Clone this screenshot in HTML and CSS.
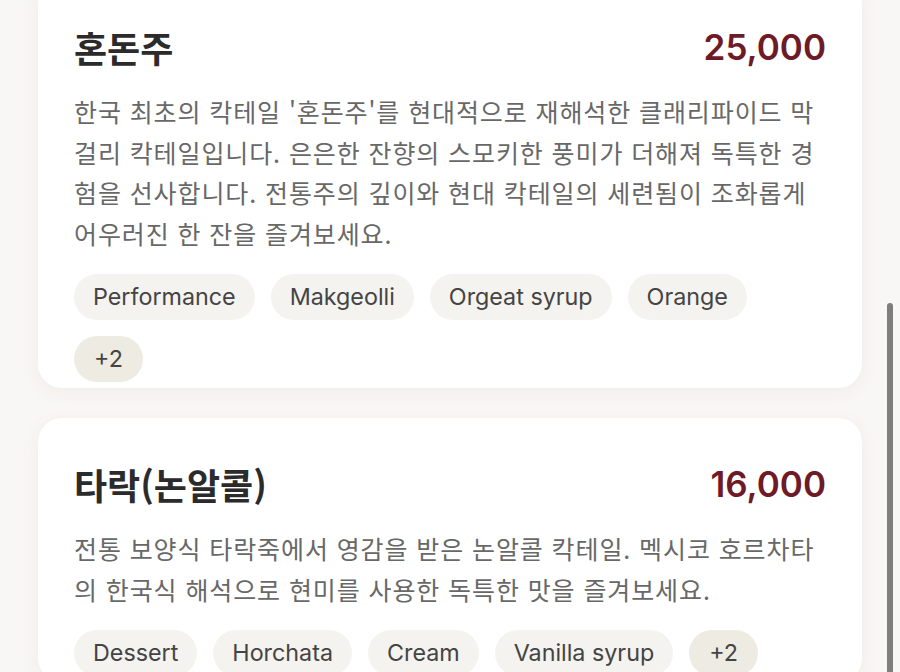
FILE: index.html
```html
<!DOCTYPE html>
<html lang="ko">
<head>
<meta charset="utf-8">
<title>Menu</title>
<link rel="stylesheet" href="styles.css">
</head>
<body>
<main class="list">
  <article class="card">
    <div class="card-head">
      <h2 class="name">혼돈주</h2>
      <span class="price">25,000</span>
    </div>
    <p class="desc">한국 최초의 칵테일 '혼돈주'를 현대적으로 재해석한 클래리파이드 막걸리 칵테일입니다. 은은한 잔향의 스모키한 풍미가 더해져 독특한 경험을 선사합니다. 전통주의 깊이와 현대 칵테일의 세련됨이 조화롭게 어우러진 한 잔을 즐겨보세요.</p>
    <ul class="tags">
      <li class="tag">Performance</li>
      <li class="tag">Makgeolli</li>
      <li class="tag">Orgeat syrup</li>
      <li class="tag">Orange</li>
      <li class="tag tag-more">+2</li>
    </ul>
  </article>
  <article class="card">
    <div class="card-head">
      <h2 class="name">타락(논알콜)</h2>
      <span class="price">16,000</span>
    </div>
    <p class="desc">전통 보양식 타락죽에서 영감을 받은 논알콜 칵테일. 멕시코 호르차타의 한국식 해석으로 현미를 사용한 독특한 맛을 즐겨보세요.</p>
    <ul class="tags">
      <li class="tag">Dessert</li>
      <li class="tag">Horchata</li>
      <li class="tag">Cream</li>
      <li class="tag">Vanilla syrup</li>
      <li class="tag tag-more">+2</li>
    </ul>
  </article>
</main>
<div class="scrollbar"></div>
</body>
</html>
```

FILE: styles.css
```css
* { box-sizing: border-box; }
html, body { margin: 0; padding: 0; }
body {
  width: 900px;
  height: 672px;
  overflow: hidden;
  background: #f9f7f5;
  font-family: Inter, "Noto Sans CJK KR", sans-serif;
  position: relative;
}
.list {
  display: flex;
  flex-direction: column;
  gap: 30px;
  padding: 0 38px;
  margin-top: -19px;
}
.card {
  background: #ffffff;
  border-radius: 24px;
  padding: 42px 36px 6px 36px;
  box-shadow: 0 4px 18px rgba(120, 90, 80, 0.07);
}
.card-head {
  display: flex;
  justify-content: space-between;
  align-items: center;
}
.name {
  margin: 0;
  font-family: "Noto Sans CJK KR", sans-serif;
  font-size: 36px;
  font-weight: 700;
  color: #2b2b2b;
  line-height: 48px;
}
.price {
  font-family: Inter, sans-serif;
  font-size: 35px;
  font-weight: 600;
  color: #6e1a27;
  line-height: 48px;
}
.desc {
  margin: 20px 0 0 0;
  font-family: "Noto Sans CJK KR", sans-serif;
  font-size: 25px;
  letter-spacing: 0.9px;
  line-height: 40.5px;
  color: #686868;
}
.tags {
  list-style: none;
  margin: 21px 0 0 0;
  padding: 0;
  display: flex;
  flex-wrap: wrap;
  gap: 16px 16px;
}
.tag {
  height: 46px;
  padding: 0 19px;
  border-radius: 23px;
  background: #f5f3ef;
  color: #444444;
  font-family: Inter, sans-serif;
  font-size: 23.3px;
  line-height: 46px;
}
.tag-more {
  padding: 0 20px;
  background: #eeebe2;
}
.scrollbar {
  position: absolute;
  left: 887px;
  top: 303px;
  width: 6px;
  height: 380px;
  border-radius: 3px;
  background: #7e7e7e;
}
```
